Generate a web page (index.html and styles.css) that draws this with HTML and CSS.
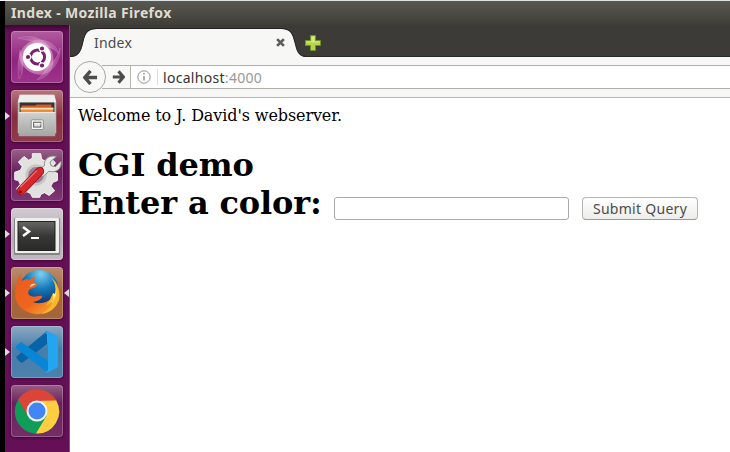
FILE: index.html
```html
<!DOCTYPE html>
<html lang="en">
<head>
<meta charset="utf-8">
<title>Index</title>
<link rel="stylesheet" href="styles.css">
</head>
<body>
<div class="topline"></div>
<div class="screen">
  <header class="titlebar"><span class="window-title">Index - Mozilla Firefox</span></header>
  <div class="desktop">
    <nav class="launcher">
      <div class="tile dash">
        <svg viewBox="0 0 52 52">
          <defs><radialGradient id="swirl" gradientUnits="userSpaceOnUse" cx="26" cy="26" r="25"><stop offset=".45" stop-color="#f3c7e5" stop-opacity=".75"/><stop offset="1" stop-color="#c470b0" stop-opacity=".08"/></radialGradient></defs>
          <g fill="url(#swirl)" stroke="#e5abd5" stroke-opacity=".35" stroke-width=".7"><path d="M8 48C4 22 13 8 31 9c9 1 15 7 17 14C39 12 20 12 14 25c-4 8 0 15-6 23z"/><path d="M7 7c18-5 32 4 35 18 2 13-6 22-16 24 8-8 13-14 10-25C32 11 20 10 7 7z"/><path d="M49 17c0 20-14 30-27 25C10 37 7 27 9 19c4 14 12 19 22 17 10-2 15-8 18-19z"/></g>
          <circle cx="26" cy="26" r="14" fill="#fff"/>
          <circle cx="26.500" cy="26" r="7" fill="none" stroke="#77216f" stroke-width="3.200"/>
          <g stroke="#fff" stroke-width="1.200"><path d="M26.500 26H14M26.500 26l6-10M26.500 26l6 10"/><g fill="#77216f"><circle cx="17" cy="26" r="2.700"/><circle cx="31" cy="17.500" r="2.700"/><circle cx="31" cy="34.500" r="2.700"/></g></g><circle cx="26.500" cy="26" r="5.300" fill="#fff"/>
        </svg>
      </div>
      <div class="tile files running">
        <svg viewBox="-1 -1 54 54">
          <defs><linearGradient id="drawer" x2="0" y2="1"><stop stop-color="#d0d0ce"/><stop offset="1" stop-color="#a5a5a4"/></linearGradient></defs>
          <path d="M8 4h36l2 8v32H6V12z" fill="#bcbcbb"/><path d="M8 4h36l2 8H6z" fill="#eeeeed"/>
          <path d="M8 12h36v10H8z" fill="#333"/><path d="M10 15h14l2-1h15v8H10z" fill="#d65b24"/><path d="M9 17h34v5H9z" fill="#f28b37"/><path d="M9 18.500h34" stroke="#ffe4b5" stroke-width="1.500"/>
          <path d="M7 22h38v25H7z" fill="url(#drawer)"/><path d="M7 22.500h38" stroke="#eee"/>
          <rect x="20" y="30" width="12.500" height="10" rx="1" fill="#fafafa" stroke="#888"/><rect x="22.500" y="32.500" width="7.500" height="5" fill="#ddd" stroke="#555"/><path d="M23 34h7" stroke="#fff"/>
        </svg>
      </div>
      <div class="tile settings">
        <svg viewBox="-1 -1 56 56">
          <path d="M22 4h9l1 6 4 2 5-4 6 6-4 5 2 5 4 1v8l-5 2-2 4 4 5-6 5-5-3-4 2-1 3h-8l-2-4-4-2-5 3-6-6 4-5-2-4-4-1v-8l6-2 2-4-4-5 6-6 5 4 4-2z" fill="#e1e2df" stroke="#f7f7f7"/>
          <circle cx="26" cy="27" r="10" fill="#9d7a98" stroke="#c6c7c4" stroke-width="3"/>
          <path d="M28 22l7-5c-1-7 5-12 13-10l-7 6 1 4 5 1 6-6c1 9-6 13-13 11l-7 6z" fill="#e9eae7" stroke="#868981"/>
          <path d="M10 44l20-21" stroke="#8d1519" stroke-width="9.500" stroke-linecap="round"/><path d="M10 44l20-21" stroke="#d8282e" stroke-width="7.500" stroke-linecap="round"/><path d="M9 40l18-18" stroke="#f2797b" stroke-width="1.300"/><circle cx="9" cy="45" r="1.700" fill="#711"/>
        </svg>
      </div>
      <div class="tile terminal running">
        <svg viewBox="0 0 52 52">
          <defs><linearGradient id="term" x2="0" y2="1"><stop stop-color="#666764"/><stop offset=".5" stop-color="#383936"/><stop offset="1" stop-color="#292a28"/></linearGradient></defs>
          <rect x="3" y="10" width="46" height="37" rx="1" fill="#868585"/><rect x="4" y="10" width="44" height="35" rx="1" fill="#efefee"/><rect x="7" y="13.500" width="37" height="29" fill="url(#term)" stroke="#222"/>
          <path d="M12 19l6 4.500-6 4.500" fill="none" stroke="#fff" stroke-width="2.500"/><path d="M20 30h8" stroke="#fff" stroke-width="2"/>
        </svg>
      </div>
      <div class="tile firefox running focused">
        <svg viewBox="0 0 52 52">
          <defs><radialGradient id="globe" cx=".55" cy=".1" r=".75"><stop stop-color="#7dd0f2"/><stop offset=".5" stop-color="#187dbd"/><stop offset="1" stop-color="#123672"/></radialGradient><linearGradient id="fox" x2=".9" y2="1"><stop stop-color="#e65c20"/><stop offset=".6" stop-color="#f0651f"/><stop offset="1" stop-color="#f8aa2c"/></linearGradient></defs>
          <circle cx="28" cy="22.500" r="19.500" fill="url(#globe)"/>
          <path d="M9 8l2 6c3-2 6-2 8-1l5-4-1 6 3 2-1 3-6 2c-3 3-2 6 1 7 4 2 7-1 11 0 1 2-4 5-9 6 7 3 16 0 20-5l3 5c-6 11-18 15-28 10C6 41 2 31 5 21c0-4 1-9 4-13z" fill="url(#fox)"/>
          <path d="M40 10c7 6 10 15 8 23-3 8-9 13-18 14 7-4 10-7 11-12-2 2-4 3-6 3 4-4 5-8 7-12l2 2c2-6 0-12-4-18z" fill="#f9b62b"/><path d="M44 16c3 9 1 15-3 20 2-5 1-8 1-10l2 1c1-4 1-7 0-11z" fill="#ffec83"/><path d="M25 17l-6 3c0-2 2-4 6-3z" fill="#ffe1ae"/>
        </svg>
      </div>
      <div class="tile code running">
        <svg viewBox="0 0 52 52">
          <path d="M5 31L36 5v13L11 37q-3-1-6-6z" fill="#0864a8"/><path d="M5 20l5-4 27 19v12L5 22z" fill="#0886d5"/><path d="M36 5l11 5v31l-11 6-2-2c2 1 3 0 3-2V11c0-2-1-4-3-3z" fill="#24a5ef"/>
        </svg>
      </div>
      <div class="tile chrome">
        <svg viewBox="0 0 52 52">
          <circle cx="26" cy="26.500" r="22.200" fill="#0f9d58"/><path d="M7.200 14.500A22.200 22.200 0 0 1 45.500 16H26l-9 15.500z" fill="#db4437"/><path d="M45.200 15.500A22.200 22.200 0 0 1 25 48.600L35.500 31 26 16z" fill="#ffcd40"/><circle cx="26" cy="26" r="10.500" fill="#f4f4f4"/><circle cx="26" cy="26" r="8.500" fill="#4285f4"/>
        </svg>
      </div>
    </nav>
    <main class="browser">
      <div class="tabs">
        <div class="tab">
          <svg class="tab-shape" viewBox="0 0 237 32"><path d="M0 32c9 0 11-6 13-15 2-9 5-13 14-13h184c11 0 12 7 14 14 2 8 3 14 12 14z" fill="#f7f7f6"/><path d="M0 31.500c9 0 11-6 13-15 2-9 5-13 14-13h184c11 0 12 7 14 14 2 8 3 14 12 14" fill="none" stroke="#22221f"/></svg>
          <span class="tab-title">Index</span>
          <svg class="close" viewBox="0 0 8 8"><path d="M1 1l6 6M7 1L1 7" stroke="#5c5c59" stroke-width="2.400"/></svg>
        </div>
        <svg class="plus" viewBox="0 0 16 16"><path d="M5.500.5h5v5h5v5h-5v5h-5v-5h-5v-5h5z" fill="#b5d34e" stroke="#6d9520"/><path d="M6.500 1.500h3v5h5v1h-13v-1h5z" fill="#d9e983"/></svg>
      </div>
      <div class="toolbar">
        <div class="back"><svg class="arrow-left" viewBox="0 0 16 16"><path d="M8 1L2 8l6 7M2.500 8H15" fill="none" stroke="#4d4d4b" stroke-width="3.600"/></svg></div>
        <div class="address">
          <div class="forward"><svg class="arrow-right" viewBox="0 0 16 16"><path d="M8 1l6 7-6 7M13.500 8H1" fill="none" stroke="#4d4d4b" stroke-width="3.800"/></svg></div>
          <svg class="info" viewBox="0 0 14 14"><circle cx="7" cy="7" r="6.200" fill="none" stroke="#929292"/><path d="M7 6v4.500M7 3v1.500" stroke="#929292" stroke-width="1.500"/></svg>
          <span class="url">localhost<span class="port">:4000</span></span>
        </div>
      </div>
      <section class="page">
        <p class="welcome">Welcome to J. David's webserver.</p>
        <h1 class="heading">CGI demo</h1>
        <form class="color-form">
          <label class="prompt" for="color">Enter a color:</label>
          <input class="color-input" id="color" type="text">
          <button class="submit" type="button"><span>Submit Query</span></button>
        </form>
      </section>
    </main>
  </div>
</div>
</body>
</html>
```
FILE: styles.css
```css
* { box-sizing: border-box; }
body { margin: 0; width: 730px; height: 452px; overflow: hidden; background: #000; font-family: "Noto Sans", sans-serif; }
svg { display: block; }
.topline { height: 1px; background: linear-gradient(90deg, #fff 68px, #dce1e5 68px); }
.screen { height: 451px; margin-left: 5px; }
.titlebar { height: 24px; padding-left: 6px; background: linear-gradient(#595850, #3e3d38); }
.window-title { display: block; color: #dfdbd2; font: bold 14px/24px "Noto Sans", sans-serif; letter-spacing: .34px; white-space: nowrap; }
.desktop { display: flex; height: 427px; }
.launcher { width: 65px; padding: 6px; display: flex; flex-direction: column; gap: 7px; background: linear-gradient(rgba(55,0,48,.8), rgba(80,10,72,0) 7px), #650f57; border-right: 1px solid #81537a; }
.tile { position: relative; flex: none; width: 52px; height: 52px; border-radius: 4px; box-shadow: inset 0 0 0 1px rgba(255,255,255,.23), 0 1px 3px rgba(20,0,20,.5); }
.tile > svg { width: 52px; height: 52px; }
.dash { background: linear-gradient(#b15c9f, #922480 55%, #9d348b); }
.files { background: linear-gradient(#b7757c, #872e3e 50%, #8e3b4c); }
.settings { background: linear-gradient(#986088, #69205e 45%, #803675); }
.terminal { background: linear-gradient(#d1ccd1, #b4abb4 60%, #c2bac2); }
.firefox { background: linear-gradient(#bc8c70, #a46838 50%, #a4653c); }
.code { background: linear-gradient(#8da9c2, #467da9 45%, #4b82ad); }
.chrome { background: linear-gradient(#946084, #6c205d 35%, #752d68); }
.running::before { content: ""; position: absolute; left: -6px; top: 22px; border: 4px solid transparent; border-left: 5px solid #ded9dc; border-right: 0; }
.focused::after { content: ""; position: absolute; right: -6px; top: 22px; border: 4px solid transparent; border-right: 5px solid #ded9dc; border-left: 0; }
.browser { flex: 1; min-width: 0; background: #fff; }
.tabs { height: 32px; display: flex; align-items: center; background: #3c3b37; border-bottom: 1px solid #292825; }
.tab { position: relative; width: 237px; height: 32px; display: flex; align-items: center; flex: none; }
.tab-shape { position: absolute; inset: 0; width: 237px; height: 32px; }
.tab-title { position: relative; margin: 4px 0 0 24px; font-size: 14px; line-height: 20px; letter-spacing: .2px; color: #4c4c4a; }
.close { position: relative; width: 9px; height: 9px; margin: 4px 22px 0 auto; }
.plus { width: 16px; height: 16px; margin: 4px 0 0 -2px; }
.toolbar { height: 41px; padding-left: 4px; display: flex; align-items: center; background: #f7f7f6; border-bottom: 1px solid #b5b5b2; }
.back { position: relative; z-index: 1; flex: none; width: 32px; height: 32px; border: 1px solid #a7a7a3; border-radius: 50%; background: #f8f8f7; display: flex; align-items: center; justify-content: center; }
.arrow-left { width: 15px; height: 15px; }
.address { flex: 1; height: 24px; margin-left: -4px; display: flex; align-items: center; border: solid #afafab; border-width: 1px 0; background: #fff; }
.forward { width: 29px; height: 22px; padding: 4px 0 0 10px; background: #f8f8f7; border-right: 1px solid #b5b5b2; }
.arrow-right { width: 13px; height: 14px; }
.info { width: 14px; height: 14px; margin-left: 6px; }
.url { margin-left: 6px; padding-left: 5px; border-left: 1px solid #ddd; height: 16px; font-size: 14px; line-height: 17px; letter-spacing: .3px; color: #333; white-space: nowrap; }
.port { color: #989898; }
.page { padding: 8px; font-family: "DejaVu Serif", serif; color: #000; }
.welcome { margin: 0; font-size: 16px; line-height: 19px; letter-spacing: -.1px; white-space: nowrap; }
.heading { margin: 21px 0 0; font-size: 32px; line-height: 38px; letter-spacing: -.15px; }
.color-form { display: flex; height: 38px; align-items: flex-start; }
.prompt { width: 256px; flex: none; white-space: nowrap; font-size: 32px; font-weight: bold; line-height: 38px; letter-spacing: -.15px; }
.color-input { width: 235px; height: 23px; margin: 13px 13px 0 0; border: 1px solid #aaa; border-radius: 3px; background: #fff; padding: 2px; }
.submit { width: 116px; height: 23px; margin: 13px 0 0; padding: 0; border: 1px solid #b5b5b2; border-bottom-color: #999; border-radius: 4px; background: linear-gradient(#fff, #ededeb); color: #4c4c4c; font: 14px/20px "Noto Sans", sans-serif; letter-spacing: .28px; white-space: nowrap; }
```
